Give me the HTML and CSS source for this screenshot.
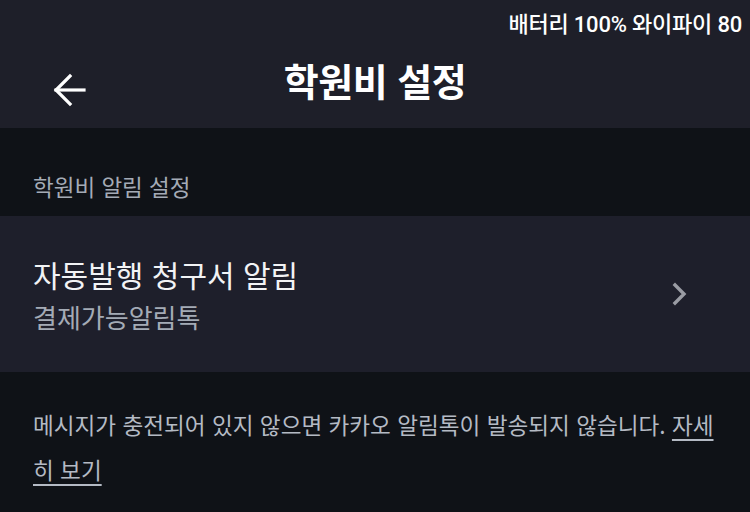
FILE: index.html
```html
<!DOCTYPE html>
<html lang="ko">
<head>
<meta charset="utf-8">
<link rel="stylesheet" href="styles.css">
</head>
<body>
<header class="app-header">
  <div class="status-bar">배터리 100% 와이파이 80</div>
  <div class="title-bar">
    <button class="back-btn" aria-label="뒤로">
      <svg width="36" height="36" viewBox="0 0 36 36" fill="none" stroke="#ffffff" stroke-width="3.2" stroke-linecap="square">
        <path d="M4 18 H32"/>
        <path d="M18 4 L4 18 L18 32"/>
      </svg>
    </button>
    <h1 class="title">학원비 설정</h1>
  </div>
</header>
<main>
  <div class="section-label">학원비 알림 설정</div>
  <div class="row">
    <div class="row-text">
      <div class="row-title">자동발행 청구서 알림</div>
      <div class="row-sub">결제가능알림톡</div>
    </div>
    <svg class="chevron" width="16" height="24" viewBox="0 0 16 24" fill="none" stroke="#9a9ca4" stroke-width="3.4" stroke-linecap="square">
      <path d="M3 3 L12 12 L3 21"/>
    </svg>
  </div>
  <p class="notice">메시지가 충전되어 있지 않으면 카카오 알림톡이 발송되지 않습니다. <a class="more" href="#">자세히 보기</a></p>
</main>
</body>
</html>
```
FILE: styles.css
```css
html, body {
  margin: 0;
  padding: 0;
}
body {
  background: #0f1217;
  font-family: "Noto Sans CJK KR", "Noto Sans", sans-serif;
  color: #ffffff;
  width: 750px;
  height: 512px;
  overflow: hidden;
}
.app-header {
  background: #1e1f29;
  height: 128px;
  display: flex;
  flex-direction: column;
}
.status-bar {
  height: 44px;
  display: flex;
  align-items: center;
  justify-content: flex-end;
  padding-right: 8px;
  font-family: Roboto, "Noto Sans CJK KR", sans-serif;
  font-size: 22px;
  font-weight: 500;
  color: #ffffff;
  letter-spacing: -0.2px;
}
.title-bar {
  flex: 1;
  position: relative;
  display: flex;
  align-items: center;
  justify-content: center;
  padding-bottom: 14px;
}
.back-btn {
  position: absolute;
  left: 52px;
  top: 28px;
  background: none;
  border: 0;
  padding: 0;
  width: 36px;
  height: 36px;
  display: flex;
}
.title {
  margin: 0;
  font-size: 38px;
  font-weight: 700;
  letter-spacing: -0.5px;
}
.section-label {
  height: 88px;
  box-sizing: border-box;
  padding: 42px 0 0 33px;
  font-size: 22.5px;
  color: #a4abb6;
  line-height: 32px;
}
.row {
  background: #1e1f2b;
  height: 156px;
  box-sizing: border-box;
  padding: 0 62px 0 33px;
  display: flex;
  align-items: center;
  justify-content: space-between;
}
.row-text {
  display: flex;
  flex-direction: column;
  gap: 4px;
}
.row-title {
  font-size: 30px;
  color: #f2f3f5;
  line-height: 42px;
}
.row-sub {
  font-size: 26px;
  color: #a4abb6;
  line-height: 36px;
}
.notice {
  margin: 0;
  padding: 30px 30px 0 33px;
  font-size: 22.6px;
  line-height: 45px;
  color: #b4bac4;
}
.more {
  color: #b4bac4;
  text-decoration: underline;
  text-underline-offset: 5px;
  text-decoration-thickness: 2px;
}
```
